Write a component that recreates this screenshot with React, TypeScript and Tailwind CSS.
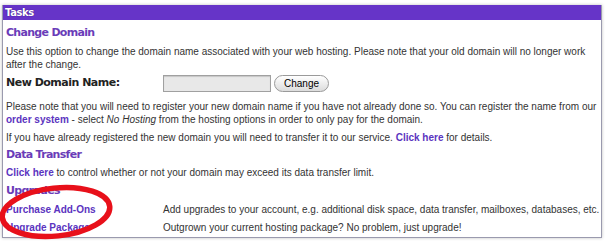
import React from "react";

const H = ({ children }: { children: React.ReactNode }) => (
  <div className="font-['DejaVu_Sans',sans-serif] font-bold text-[11px] leading-[16px] text-[#6a3cb8] tracking-[-0.7px]">{children}</div>
);

const L = ({ children }: { children: React.ReactNode }) => (
  <span className="font-bold text-[#5b34c0]">{children}</span>
);

export default function App() {
  return (
    <div className="relative w-[607px] h-[246px] bg-white overflow-hidden font-['Liberation_Sans',Arial,sans-serif] text-[10px] text-[#333]">
      <div className="ml-[2px] mt-[5px] w-[600px] border-r border-b border-l border-[#9a9aae] shadow-[0_0_3px_rgba(0,0,0,0.25)]">
        <div className="h-[15px] bg-[#6634c8] text-white font-['DejaVu_Sans',sans-serif] font-bold text-[10px] leading-[15px] px-[2px] tracking-[-0.4px] [text-shadow:0_0_1px_#2a0a6a]">
          Tasks
        </div>
        <div className="pl-[3px] pr-[4px] pt-[5px]">
          <H>Change Domain</H>
          <p className="mt-[4px] leading-[13px] whitespace-nowrap">
            Use this option to change the domain name associated with your web hosting. Please note that your old domain will no longer work<br />after the change.
          </p>
          <div className="flex items-center mt-[2px] h-[20px]">
            <div className="w-[157px] shrink-0 font-['DejaVu_Sans',sans-serif] font-bold text-[11px] tracking-[-0.5px] text-[#222]">New Domain Name:</div>
            <div className="w-[108px] h-[17px] bg-[#e8e8e8] border border-[#a0a0a0] shadow-[inset_0_1px_1px_rgba(0,0,0,0.15)]"></div>
            <button className="ml-[3px] w-[55px] h-[17px] rounded-full border border-[#9a9a9a] bg-gradient-to-b from-white to-[#dcdcdc] text-[10px] leading-[15px] text-black">Change</button>
          </div>
          <p className="mt-[7px] leading-[13px] whitespace-nowrap">
            Please note that you will need to register your new domain name if you have not already done so. You can register the name from our<br /><L>order system</L> - select <i>No Hosting</i> from the hosting options in order to only pay for the domain.
          </p>
          <p className="mt-[5px] leading-[13px]">
            If you have already registered the new domain you will need to transfer it to our service. <L>Click here</L> for details.
          </p>
          <div className="mt-[3px]"><H>Data Transfer</H></div>
          <p className="mt-[3px] leading-[13px]">
            <L>Click here</L> to control whether or not your domain may exceed its data transfer limit.
          </p>
          <div className="mt-[4px]"><H>Upgrades</H></div>
          <div className="flex mt-[2px] leading-[18px] whitespace-nowrap">
            <div className="w-[157px] shrink-0"><L>Purchase Add-Ons</L></div>
            <div>Add upgrades to your account, e.g. additional disk space, data transfer, mailboxes, databases, etc.</div>
          </div>
          <div className="flex leading-[18px] whitespace-nowrap">
            <div className="w-[157px] shrink-0"><L>Upgrade Package</L></div>
            <div>Outgrown your current hosting package? No problem, just upgrade!</div>
          </div>
        </div>
      </div>
      <svg className="absolute left-0 top-0 pointer-events-none" width="607" height="246">
        <ellipse cx="56" cy="212" rx="54" ry="24" fill="none" stroke="#e8101a" strokeWidth="5.5" transform="rotate(-6 56 212)" />
      </svg>
    </div>
  );
}
